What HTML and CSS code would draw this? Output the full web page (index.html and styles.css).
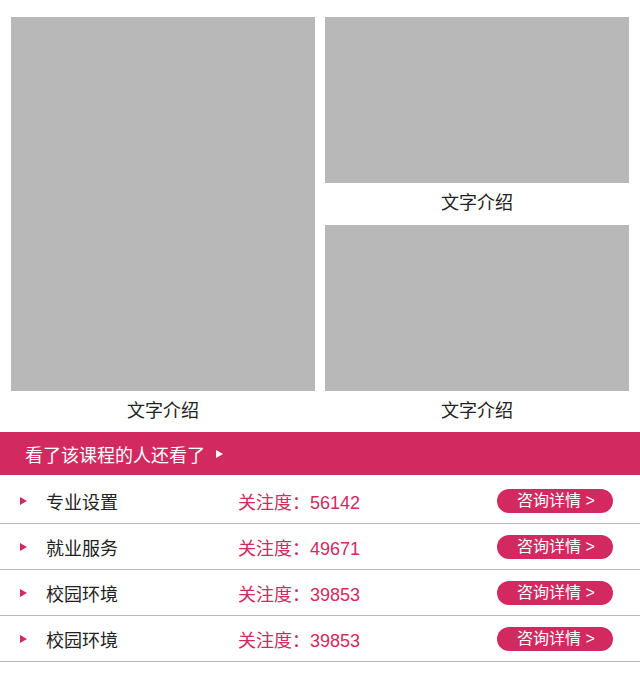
FILE: index.html
```html
<!DOCTYPE html>
<html lang="zh-CN">
<head>
  <meta charset="UTF-8" />
  <meta name="viewport" content="width=device-width, initial-scale=1.0"/>
  <title>课程推荐</title>
  <link rel="stylesheet" href="styles.css">
</head>
<body>
  <section class="gallery">
    <div class="pic pic-big">
      <div class="photo"></div>
      <div class="cap">文字介绍</div>
    </div>
    <div class="side">
      <div class="pic">
        <div class="photo"></div>
        <div class="cap">文字介绍</div>
      </div>
      <div class="pic">
        <div class="photo"></div>
        <div class="cap">文字介绍</div>
      </div>
    </div>
  </section>

  <div class="bar">
    <span>看了该课程的人还看了</span>
    <i class="bar-arrow"></i>
  </div>

  <ul class="list">
    <li class="row">
      <i class="dot"></i>
      <span class="name">专业设置</span>
      <span class="stat">关注度：56142</span>
      <a class="btn" href="#">咨询详情 &gt;</a>
    </li>
    <li class="row">
      <i class="dot"></i>
      <span class="name">就业服务</span>
      <span class="stat">关注度：49671</span>
      <a class="btn" href="#">咨询详情 &gt;</a>
    </li>
    <li class="row">
      <i class="dot"></i>
      <span class="name">校园环境</span>
      <span class="stat">关注度：39853</span>
      <a class="btn" href="#">咨询详情 &gt;</a>
    </li>
    <li class="row">
      <i class="dot"></i>
      <span class="name">校园环境</span>
      <span class="stat">关注度：39853</span>
      <a class="btn" href="#">咨询详情 &gt;</a>
    </li>
  </ul>
</body>
</html>
```

FILE: styles.css
```css
* {
  box-sizing: border-box;
  margin: 0;
  padding: 0;
}

body {
  font-family: "Liberation Sans", "Noto Sans CJK SC", sans-serif;
  background: #fff;
  color: #222;
}

.gallery {
  display: grid;
  grid-template-columns: 304px 304px;
  gap: 10px;
  padding: 17px 11px 0;
}

.photo {
  background: #b8b8b8;
  height: 166px;
}

.pic-big .photo {
  height: 374px;
}

.side {
  display: flex;
  flex-direction: column;
}

.cap {
  height: 41px;
  line-height: 40px;
  text-align: center;
  font-size: 18px;
  color: #222;
}

.side .pic:first-child .cap {
  height: 42px;
}

.bar {
  display: flex;
  align-items: center;
  height: 43px;
  padding-left: 25px;
  background: #d22a60;
  color: #fff;
  font-size: 18px;
}

.bar-arrow {
  width: 0;
  height: 0;
  margin-left: 11px;
  border-left: 7px solid #fff;
  border-top: 4px solid transparent;
  border-bottom: 4px solid transparent;
}

.list {
  list-style: none;
  padding-top: 3px;
}

.row {
  display: flex;
  align-items: center;
  height: 46px;
  padding-left: 20px;
  border-bottom: 1px solid #bbb;
  font-size: 18px;
}

.dot {
  width: 0;
  height: 0;
  margin-right: 19px;
  border-left: 7px solid #d22a60;
  border-top: 4px solid transparent;
  border-bottom: 4px solid transparent;
}

.name {
  width: 192px;
  color: #222;
}

.stat {
  flex: 1;
  color: #d22a60;
}

.btn {
  width: 116px;
  height: 24px;
  line-height: 24px;
  margin-right: 27px;
  padding-left: 20px;
  border-radius: 12px;
  background: #d22a60;
  color: #fff;
  font-size: 16px;
  text-decoration: none;
}
```
